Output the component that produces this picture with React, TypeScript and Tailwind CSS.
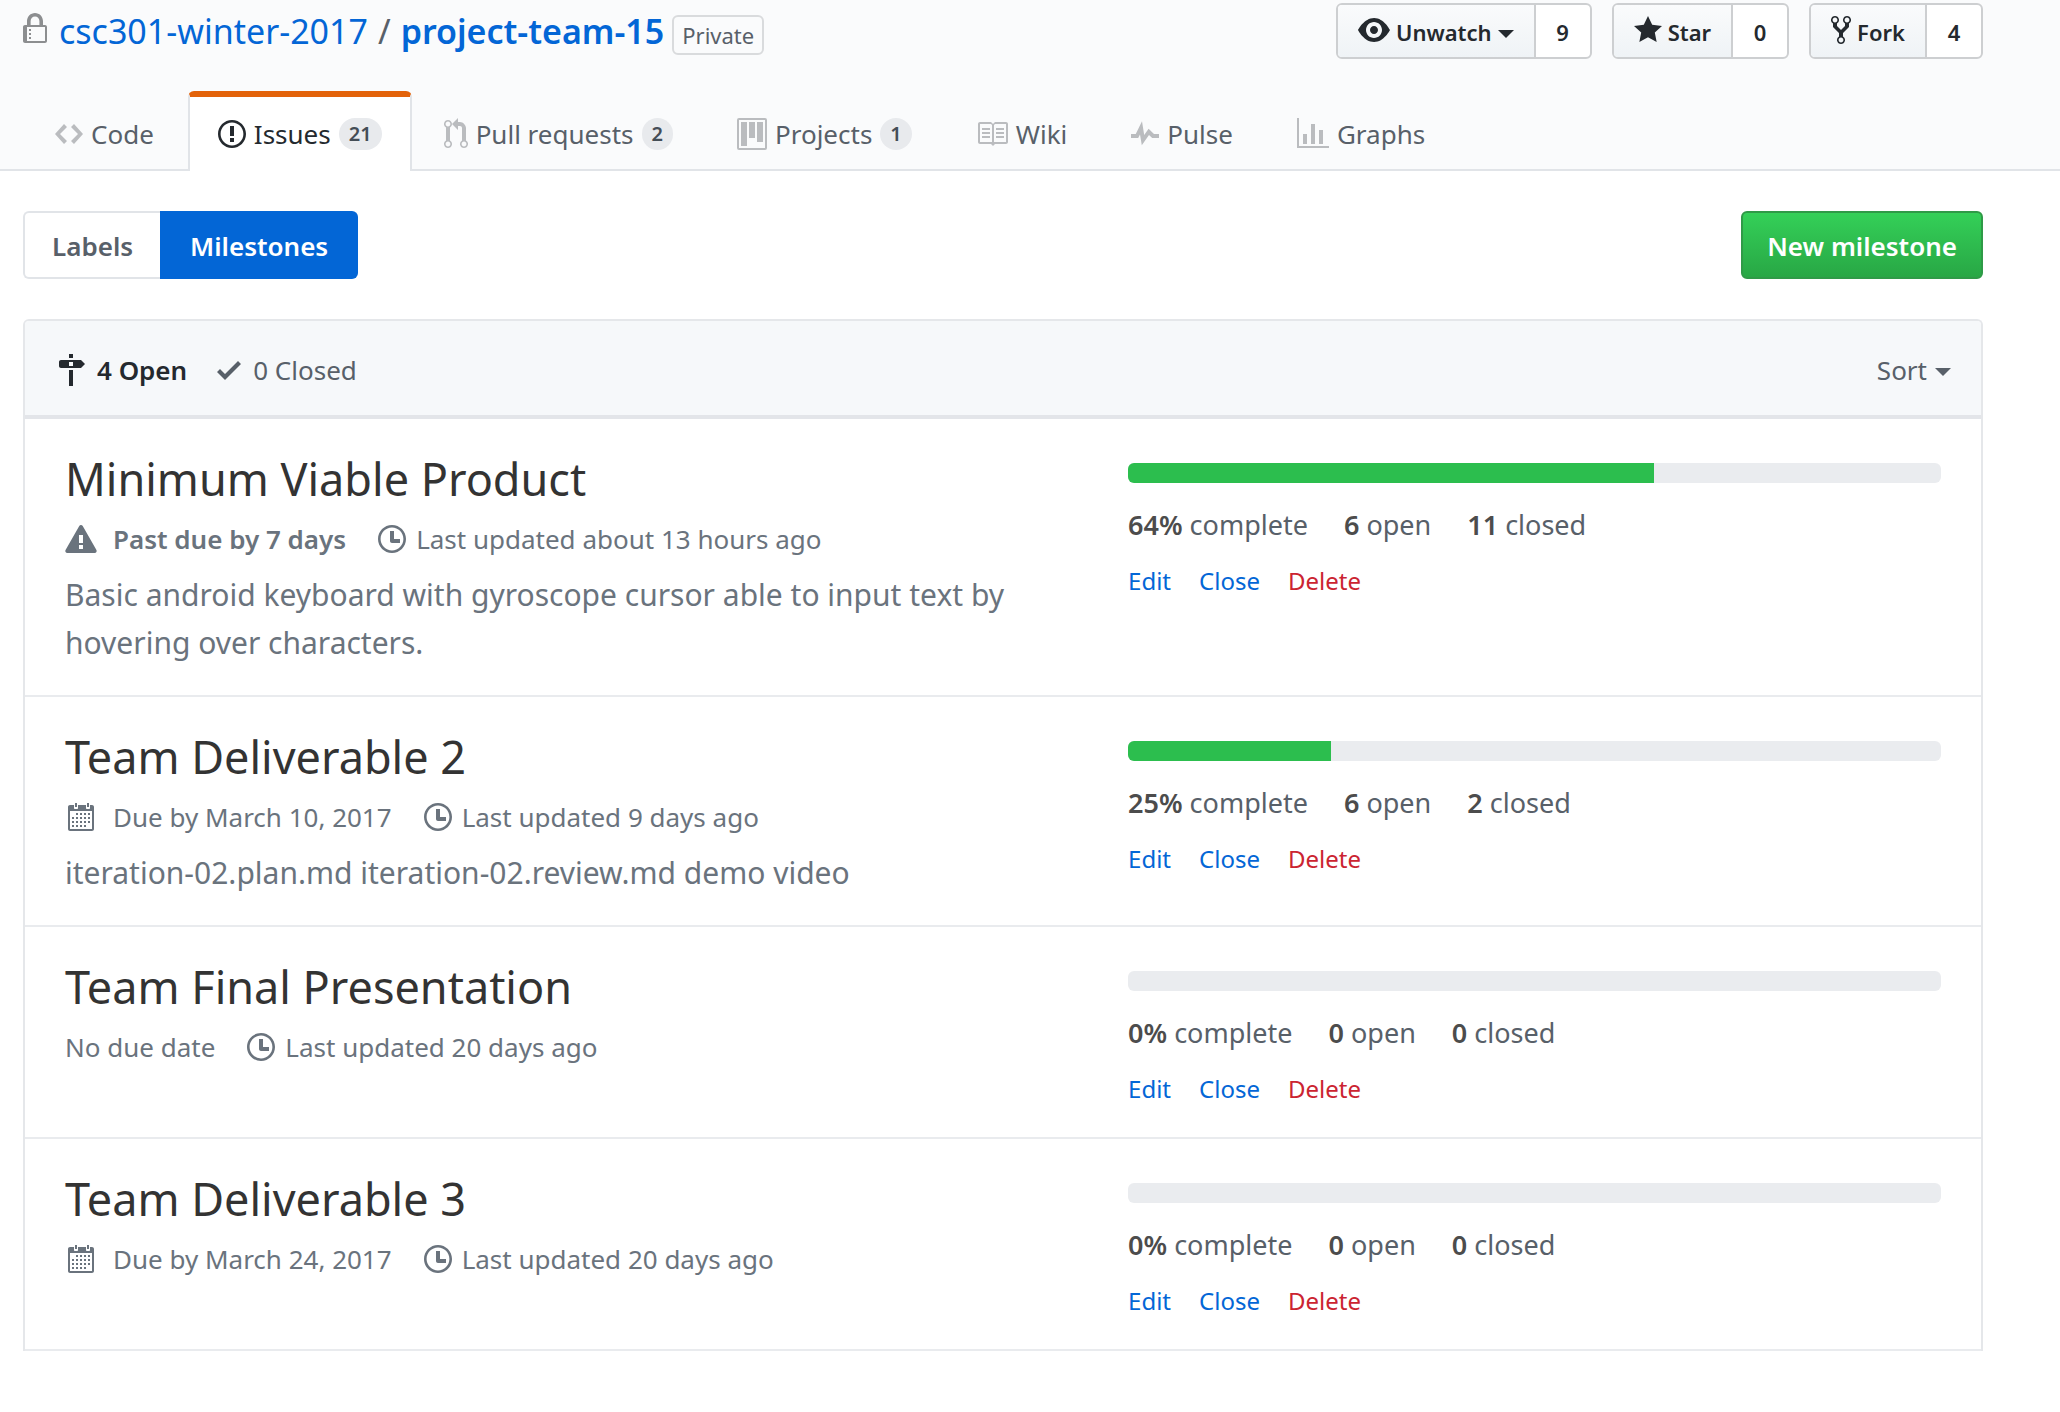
import type { ReactNode } from "react";

const icons = {
  lock: { w: 12, d: "M4 13H3v-1h1v1zm8-6v7c0 .55-.45 1-1 1H1c-.55 0-1-.45-1-1V7c0-.55.45-1 1-1h1V4c0-2.2 1.8-4 4-4s4 1.8 4 4v2h1c.55 0 1 .45 1 1zM3.8 6h4.41V4c0-1.22-.98-2.2-2.2-2.2-1.22 0-2.2.98-2.2 2.2v2H3.8zM11 7H2v7h9V7zM4 8H3v1h1V8zm0 2H3v1h1v-1z" },
  code: { w: 14, d: "M9.5 3L8 4.5 11.5 8 8 11.5 9.5 13 14 8 9.5 3zm-5 0L0 8l4.5 5L6 11.5 2.5 8 6 4.5 4.5 3z" },
  issue: { w: 14, d: "M7 2.3c3.14 0 5.7 2.56 5.7 5.7s-2.56 5.7-5.7 5.7A5.71 5.71 0 0 1 1.3 8c0-3.14 2.56-5.7 5.7-5.7zM7 1C3.14 1 0 4.14 0 8s3.14 7 7 7 7-3.14 7-7-3.14-7-7-7zm1 3H6v5h2V4zm0 6H6v2h2v-2z" },
  pull: { w: 12, d: "M11 11.28V5c-.03-.78-.34-1.47-.94-2.06C9.46 2.35 8.78 2.03 8 2H7V0L4 3l3 3V4h1c.27.02.48.11.69.31.21.2.3.42.31.69v6.28A1.993 1.993 0 0 0 10 15a1.993 1.993 0 0 0 1-3.72zm-1 2.92c-.66 0-1.2-.55-1.2-1.2 0-.65.55-1.2 1.2-1.2.65 0 1.2.55 1.2 1.2 0 .65-.55 1.2-1.2 1.2zM4 3c0-1.11-.89-2-2-2a1.993 1.993 0 0 0-1 3.72v6.56A1.993 1.993 0 0 0 2 15a1.993 1.993 0 0 0 1-3.72V4.72c.59-.34 1-.98 1-1.72zm-.8 10c0 .66-.55 1.2-1.2 1.2-.65 0-1.2-.55-1.2-1.2 0-.65.55-1.2 1.2-1.2.65 0 1.2.55 1.2 1.2zM2 4.2C1.34 4.2.8 3.65.8 3c0-.65.55-1.2 1.2-1.2.65 0 1.2.55 1.2 1.2 0 .65-.55 1.2-1.2 1.2z" },
  project: { w: 15, d: "M10 12h3V2h-3v10zm-4-2h3V2H6v8zm-4 4h3V2H2v12zm-1 1h13V1H1v14zM14 0H1a1 1 0 0 0-1 1v14a1 1 0 0 0 1 1h13a1 1 0 0 0 1-1V1a1 1 0 0 0-1-1z" },
  book: { w: 16, d: "M3 5h4v1H3V5zm0 3h4V7H3v1zm0 2h4V9H3v1zm11-5h-4v1h4V5zm0 2h-4v1h4V7zm0 2h-4v1h4V9zm2-6v9c0 .55-.45 1-1 1H9.5l-1 1-1-1H2c-.55 0-1-.45-1-1V3c0-.55.45-1 1-1h5.5l1 1 1-1H15c.55 0 1 .45 1 1zm-8 .5L7.5 3H2v9h6V3.5zm7-.5H9.5l-.5.5V12h6V3z" },
  pulse: { w: 14, d: "M11.5 8L8.8 5.4 6.6 8.5 5.5 1.6 2.38 8H0v2h3.6l.9-1.8.9 5.4L9 8.5l1.6 1.5H14V8h-2.5z" },
  graph: { w: 16, d: "M16 14v1H0V0h1v14h15zM5 13H3V8h2v5zm4 0H7V3h2v10zm4 0h-2V6h2v7z" },
  eye: { w: 16, d: "M8.06 2C3 2 0 8 0 8s3 6 8.06 6C13 14 16 8 16 8s-3-6-7.94-6zM8 12c-2.2 0-4-1.78-4-4 0-2.2 1.8-4 4-4 2.22 0 4 1.8 4 4 0 2.22-1.78 4-4 4zm2-4c0 1.11-.89 2-2 2-1.11 0-2-.89-2-2 0-1.11.89-2 2-2 1.11 0 2 .89 2 2z" },
  star: { w: 14, d: "M14 6l-4.9-.64L7 1 4.9 5.36 0 6l3.6 3.26L2.67 14 7 11.67 11.33 14l-.93-4.74z" },
  fork: { w: 10, d: "M8 1a1.993 1.993 0 0 0-1 3.72V6L5 8 3 6V4.72A1.993 1.993 0 0 0 2 1a1.993 1.993 0 0 0-1 3.72V6.5l3 3v1.78A1.993 1.993 0 0 0 5 15a1.993 1.993 0 0 0 1-3.72V9.5l3-3V4.72A1.993 1.993 0 0 0 8 1zM2 4.2C1.34 4.2.8 3.65.8 3c0-.65.55-1.2 1.2-1.2.65 0 1.2.55 1.2 1.2 0 .65-.55 1.2-1.2 1.2zm3 10c-.66 0-1.2-.55-1.2-1.2 0-.65.55-1.2 1.2-1.2.65 0 1.2.55 1.2 1.2 0 .65-.55 1.2-1.2 1.2zm3-10c-.66 0-1.2-.55-1.2-1.2 0-.65.55-1.2 1.2-1.2.65 0 1.2.55 1.2 1.2 0 .65-.55 1.2-1.2 1.2z" },
  milestone: { w: 14, d: "M8 2H6V0h2v2zm4 5H2c-.55 0-1-.45-1-1V4c0-.55.45-1 1-1h10l2 2-2 2zM8 4H6v2h2V4zM6 16h2V8H6v8z" },
  check: { w: 12, d: "M12 5l-8 8-4-4 1.5-1.5L4 10l6.5-6.5z" },
  alert: { w: 16, d: "M8.865 1.52c-.18-.31-.51-.5-.87-.5s-.69.19-.87.5L.275 13.5c-.18.31-.18.69 0 1 .19.31.52.5.87.5h13.7c.36 0 .69-.19.86-.5.17-.31.18-.69.01-1L8.865 1.52zM8.995 13h-2v-2h2v2zm0-3h-2V6h2v4z" },
  clock: { w: 14, d: "M8 8h3v2H7c-.55 0-1-.45-1-1V4h2v4zM7 2.3c3.14 0 5.7 2.56 5.7 5.7s-2.56 5.7-5.7 5.7A5.71 5.71 0 0 1 1.3 8c0-3.14 2.56-5.7 5.7-5.7zM7 1C3.14 1 0 4.14 0 8s3.14 7 7 7 7-3.14 7-7-3.14-7-7-7z" },
  calendar: { w: 16, d: "M13.500 2h-1v1.500c0 .28-.22.5-.5.5h-1c-.28 0-.5-.22-.5-.5V2h-4v1.500c0 .28-.22.5-.5.5H5c-.28 0-.5-.22-.5-.5V2h-2c-.55 0-1 .45-1 1v11c0 .55.45 1 1 1h11c.55 0 1-.45 1-1V3c0-.55-.45-1-1-1zm0 12h-11V5h11v9zM6 3H5V1h1v2zm6 0h-1V1h1v2zM6.500 7h-1V6h1v1zm2 0h-1V6h1v1zm2 0h-1V6h1v1zm2 0h-1V6h1v1zM4.500 9h-1V8h1v1zm2 0h-1V8h1v1zm2 0h-1V8h1v1zm2 0h-1V8h1v1zm2 0h-1V8h1v1zm-8 2h-1v-1h1v1zm2 0h-1v-1h1v1zm2 0h-1v-1h1v1zm2 0h-1v-1h1v1zm2 0h-1v-1h1v1zm-8 2h-1v-1h1v1zm2 0h-1v-1h1v1zm2 0h-1v-1h1v1zm2 0h-1v-1h1v1z" },
};

type IconName = keyof typeof icons;

function Icon({ name, className = "" }: { name: IconName; className?: string }) {
  const { w, d } = icons[name];
  return (
    <svg
      aria-hidden="true"
      width={w * 2}
      height={32}
      viewBox={`0 0 ${w} 16`}
      fill="currentColor"
      fillRule="evenodd"
      className={`shrink-0 ${className}`}
    >
      <path d={d} />
    </svg>
  );
}

function Caret() {
  return <span aria-hidden="true" className="mt-1 border-x-8 border-t-8 border-x-transparent border-t-current" />;
}

function SocialButton({ icon, label, count, caret }: { icon: IconName; label: string; count: number; caret?: boolean }) {
  return (
    <div className="flex h-14 rounded-md border-2 border-[#cdcfd1] bg-white text-[22px] font-semibold text-[#24292e]">
      <button
        type="button"
        className="flex items-center gap-1.5 rounded-l-sm border-r-2 border-[#cdcfd1] bg-linear-to-b from-[#fafbfc] to-[#eff3f6] px-5 pt-0.5"
      >
        <Icon name={icon} className="-mt-1" />
        {label}
        {caret && <Caret />}
      </button>
      <a href="#" className="flex min-w-[54px] items-center justify-center px-5 pt-0.5">
        {count}
      </a>
    </div>
  );
}

function Tab({ icon, label, count, active }: { icon: IconName; label: string; count?: number; active?: boolean }) {
  return (
    <a
      href="#"
      aria-current={active ? "page" : undefined}
      className={
        active
          ? "-mb-0.5 ml-0.5 flex h-20 items-center gap-2 rounded-t-md border-x-2 border-t-6 border-x-[#e1e4e8] border-t-[#e36209] bg-white px-7 text-[#24292e]"
          : "flex h-[78px] items-center gap-2 border-x-2 border-t-6 border-transparent px-[30px] pt-0.5 text-[#586069]"
      }
    >
      <Icon name={icon} className={active ? "" : "text-[#babcbf]"} />
      {label}
      {count !== undefined && (
        <span className="rounded-full bg-[#e8eaed] px-2.5 text-xl leading-8 font-semibold text-[#444d56]">{count}</span>
      )}
    </a>
  );
}

interface Milestone {
  title: string;
  due: ReactNode;
  updated: string;
  description?: string;
  complete: string;
  fill: number;
  open: number;
  closed: number;
}

const milestones: Milestone[] = [
  {
    title: "Minimum Viable Product",
    due: (
      <span className="flex items-center gap-4 font-semibold">
        <Icon name="alert" />
        Past due by 7 days
      </span>
    ),
    updated: "about 13 hours ago",
    description: "Basic android keyboard with gyroscope cursor able to input text by hovering over characters.",
    complete: "64%",
    fill: 64.7,
    open: 6,
    closed: 11,
  },
  {
    title: "Team Deliverable 2",
    due: (
      <span className="flex items-center gap-4">
        <Icon name="calendar" />
        Due by March 10, 2017
      </span>
    ),
    updated: "9 days ago",
    description: "iteration-02.plan.md iteration-02.review.md demo video",
    complete: "25%",
    fill: 25,
    open: 6,
    closed: 2,
  },
  {
    title: "Team Final Presentation",
    due: <span>No due date</span>,
    updated: "20 days ago",
    complete: "0%",
    fill: 0,
    open: 0,
    closed: 0,
  },
  {
    title: "Team Deliverable 3",
    due: (
      <span className="flex items-center gap-4">
        <Icon name="calendar" />
        Due by March 24, 2017
      </span>
    ),
    updated: "20 days ago",
    complete: "0%",
    fill: 0,
    open: 0,
    closed: 0,
  },
];

function MilestoneRow({ m }: { m: Milestone }) {
  return (
    <li className="grid grid-cols-[17fr_13fr] border-b-2 border-[#e9ebee] px-10 pt-[30px] pb-7">
      <div className="pr-12 text-[#6a737d]">
        <h2 className="text-[45px] leading-[60px] text-[#333333]">
          <a href="#">{m.title}</a>
        </h2>
        <div className="mt-2.5 flex items-center gap-8 text-[26px] leading-10">
          {m.due}
          <span className="flex items-center gap-2.5">
            <Icon name="clock" />
            Last updated {m.updated}
          </span>
        </div>
        {m.description && <p className="mt-3 text-[30px] leading-12">{m.description}</p>}
      </div>
      <div>
        <div className="mt-3.5 h-5 overflow-hidden rounded-md bg-[#eaecef]">
          <div className="h-full bg-[#2cbe4e]" style={{ width: `${m.fill}%` }} />
        </div>
        <div className="mt-[22px] flex gap-9 text-[27px] leading-10 text-[#586069]">
          <span>
            <b className="font-semibold text-[#4c4c4c]">{m.complete}</b> complete
          </span>
          <span>
            <b className="font-semibold text-[#4c4c4c]">{m.open}</b> open
          </span>
          <span>
            <b className="font-semibold text-[#4c4c4c]">{m.closed}</b> closed
          </span>
        </div>
        <div className="mt-4 flex gap-7 text-2xl leading-10 text-[#0366d6]">
          <a href="#">Edit</a>
          <button type="button">Close</button>
          <button type="button" className="text-[#cb2431]">
            Delete
          </button>
        </div>
      </div>
    </li>
  );
}

export default function App() {
  return (
    <div className="min-h-screen bg-white font-['Noto_Sans','Open_Sans',sans-serif]">
      <header className="border-b-2 border-[#e1e4e8] bg-[#fafbfc] pr-[77px] pl-[23px]">
        <div className="flex h-[91px] items-start justify-between pt-[3px]">
          <h1 className="flex items-center text-[34px] leading-14 text-[#586069]">
            <Icon name="lock" className="-mt-1 mr-3 text-[#8c8e90]" />
            <a href="#" className="text-[#0366d6]">
              csc301-winter-2017
            </a>
            <span className="mx-2.5">/</span>
            <a href="#" className="font-semibold text-[#0366d6]">
              project-team-15
            </a>
            <span className="mt-2 ml-2 rounded-md border-2 border-[#d9dbdd] px-2 text-[22px] leading-9">Private</span>
          </h1>
          <div className="flex gap-5">
            <SocialButton icon="eye" label="Unwatch" count={9} caret />
            <SocialButton icon="star" label="Star" count={0} />
            <SocialButton icon="fork" label="Fork" count={4} />
          </div>
        </div>
        <nav aria-label="Repository" className="flex text-[26px]">
          <Tab icon="code" label="Code" />
          <Tab icon="issue" label="Issues" count={21} active />
          <Tab icon="pull" label="Pull requests" count={2} />
          <Tab icon="project" label="Projects" count={1} />
          <Tab icon="book" label="Wiki" />
          <Tab icon="pulse" label="Pulse" />
          <Tab icon="graph" label="Graphs" />
        </nav>
      </header>

      <main className="pt-10 pr-[77px] pb-10 pl-[23px] text-[26px]">
        <div className="flex h-[68px] justify-between font-semibold">
          <nav aria-label="Issues" className="flex">
            <a href="#" className="flex items-center rounded-l-md border-2 border-r-0 border-[#e1e4e8] px-[27px] pt-0.5 text-[#586069]">
              Labels
            </a>
            <a href="#" aria-current="page" className="flex items-center rounded-r-md bg-[#0366d6] px-[30px] pt-0.5 text-white">
              Milestones
            </a>
          </nav>
          <button
            type="button"
            className="rounded-md border-2 border-[#2f9a47] bg-linear-to-b from-[#34d058] to-[#28a745] px-6 pt-0.5 text-white"
          >
            New milestone
          </button>
        </div>

        <section className="mt-10 rounded-t-md border-2 border-b-0 border-[#e5e7ea]">
          <div className="flex h-[94px] items-center justify-between rounded-t-sm bg-[#f6f8fa] pt-1 pr-[30px] pl-8 text-[#586069]">
            <div className="flex gap-[30px]">
              <a href="#" className="flex items-center gap-3 font-semibold text-[#24292e]">
                <Icon name="milestone" />4 Open
              </a>
              <a href="#" className="flex items-center gap-3">
                <Icon name="check" />0 Closed
              </a>
            </div>
            <button type="button" className="flex items-center gap-2">
              Sort
              <Caret />
            </button>
          </div>
          <ul className="border-t-4 border-[#e3e5e9]">
            {milestones.map((m) => (
              <MilestoneRow key={m.title} m={m} />
            ))}
          </ul>
        </section>
      </main>
    </div>
  );
}
